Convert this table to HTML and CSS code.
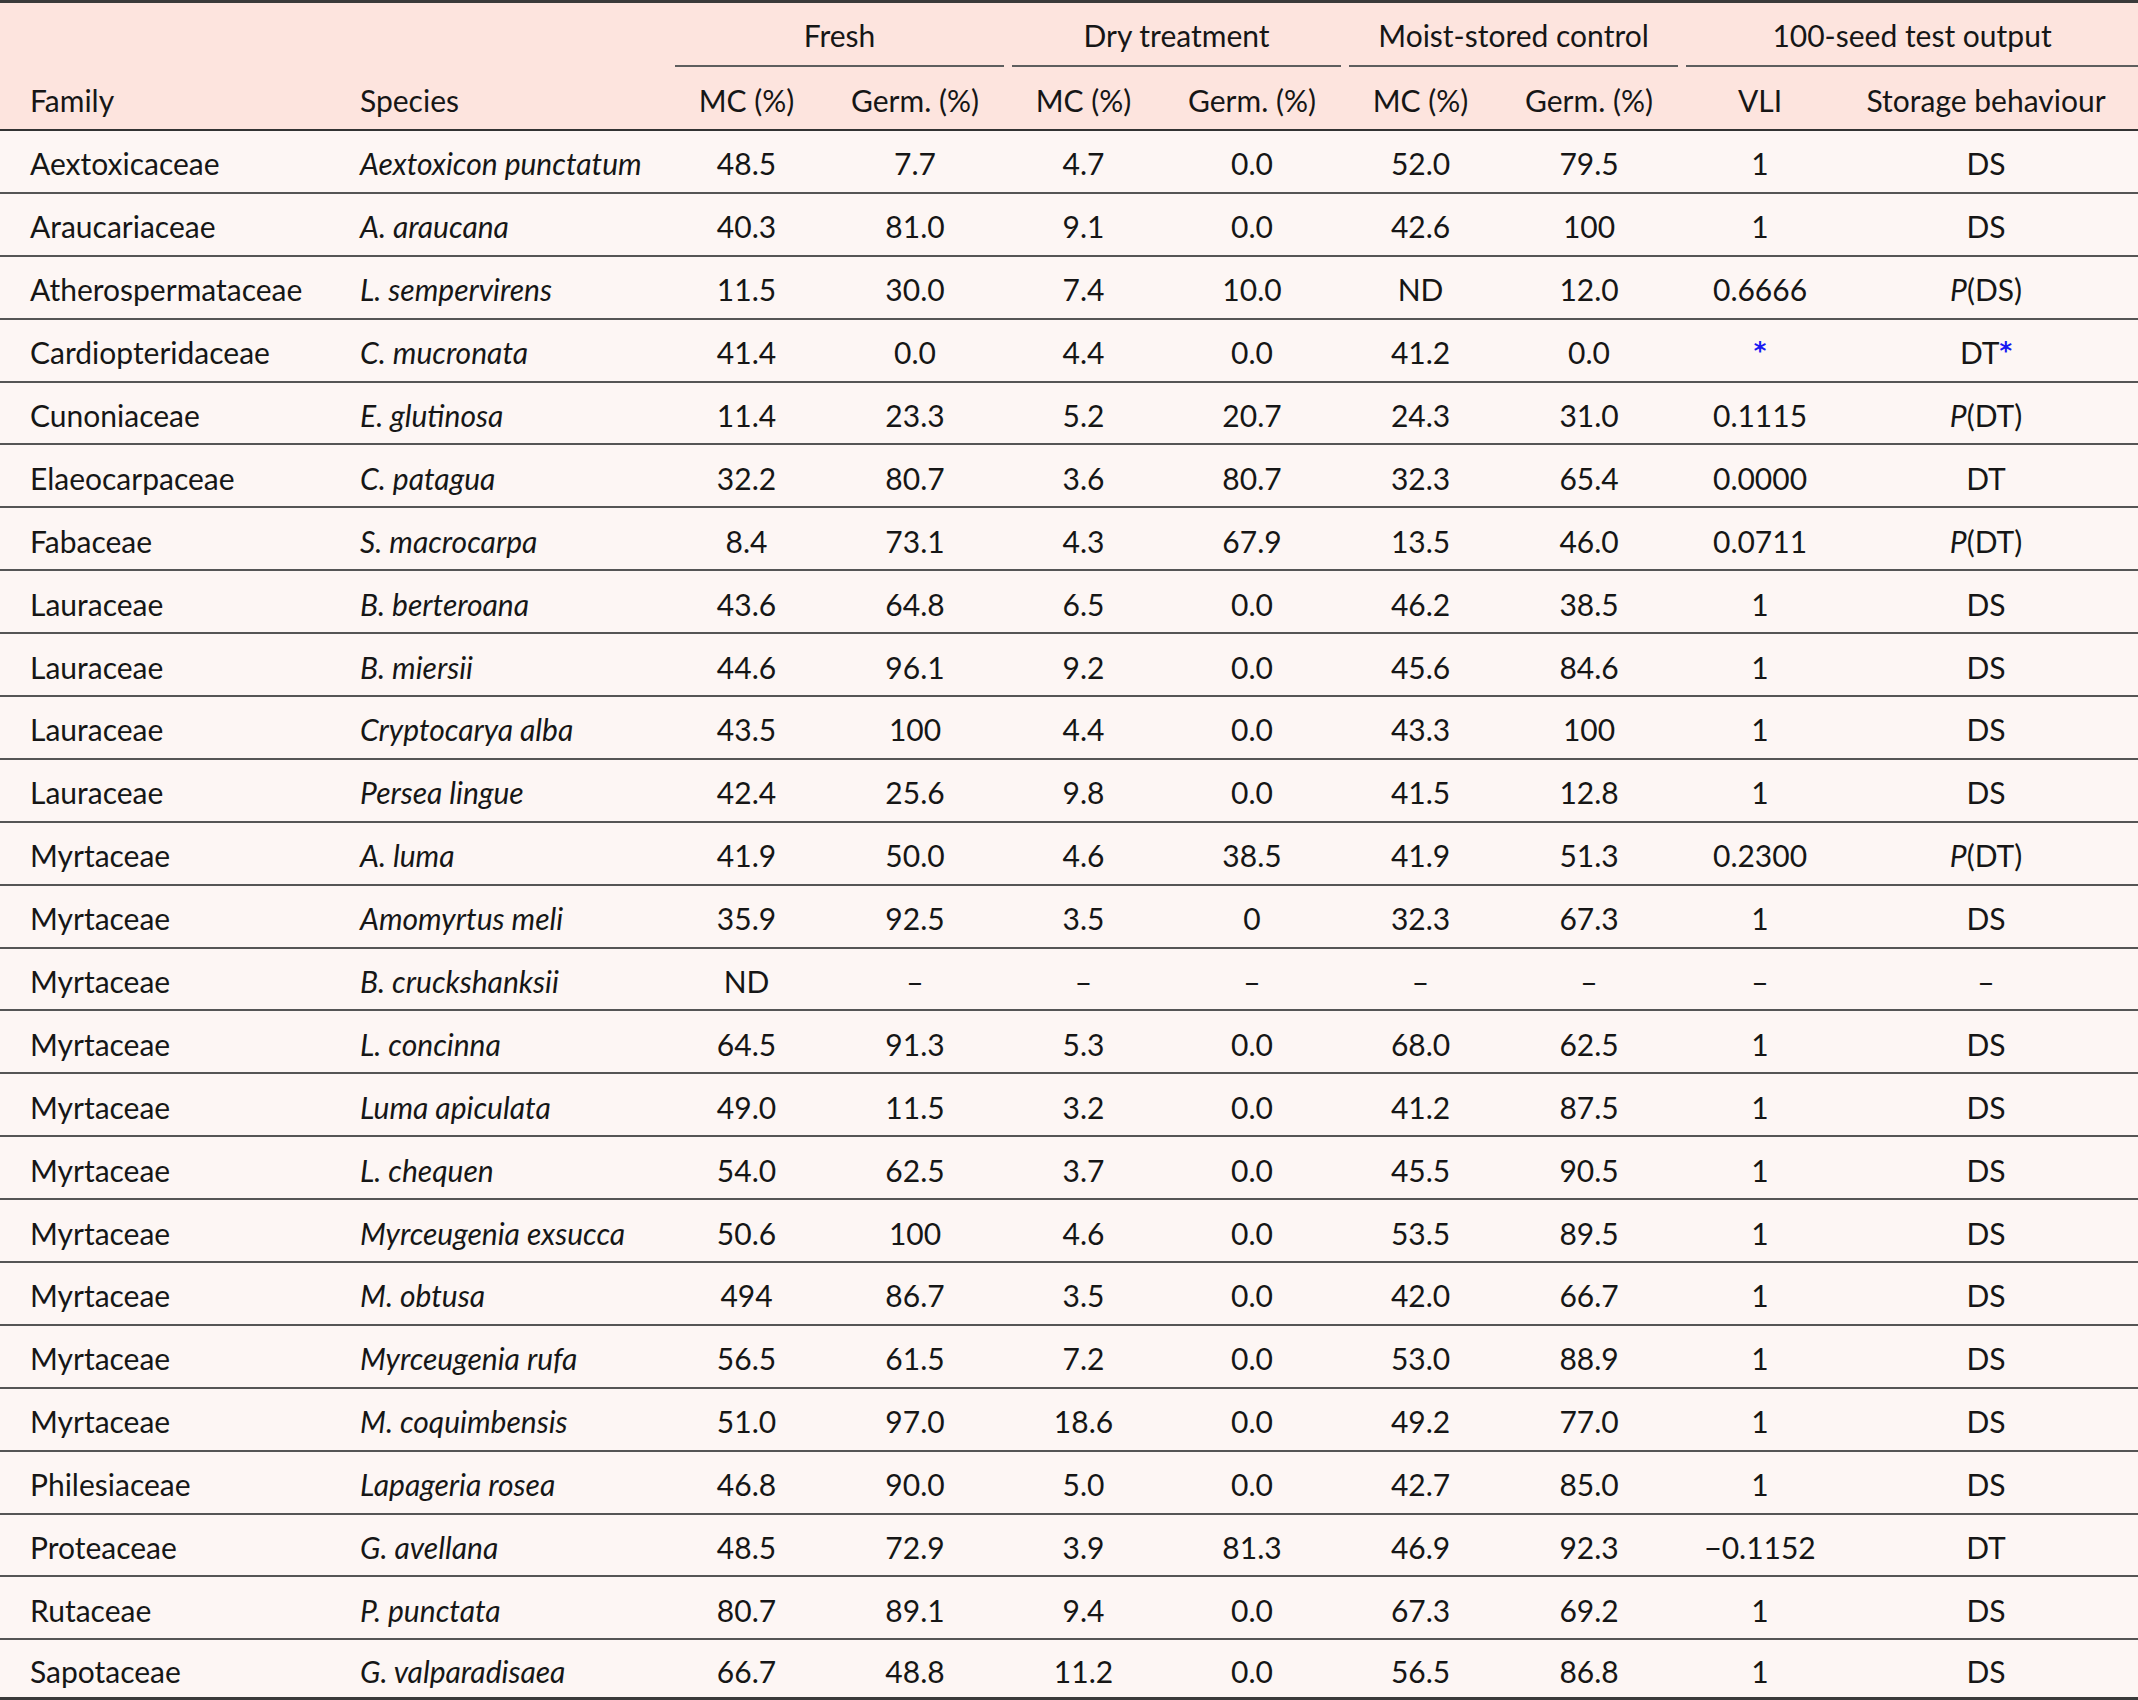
FILE: index.html
```html
<!DOCTYPE html>
<html lang="en">
<head>
<meta charset="utf-8">
<title>Seed storage behaviour</title>
<link rel="stylesheet" href="styles.css">
</head>
<body>
<table class="data">
  <colgroup>
    <col class="c-family"><col class="c-species">
    <col class="c-mc"><col class="c-germ">
    <col class="c-mc"><col class="c-germ">
    <col class="c-mc"><col class="c-germ">
    <col class="c-vli"><col class="c-store">
  </colgroup>
  <thead>
    <tr class="h1">
      <th></th><th></th>
      <th colspan="2" class="grp"><div class="grp-in">Fresh</div></th>
      <th colspan="2" class="grp"><div class="grp-in">Dry treatment</div></th>
      <th colspan="2" class="grp"><div class="grp-in">Moist-stored control</div></th>
      <th colspan="2" class="grp last"><div class="grp-in">100-seed test output</div></th>
    </tr>
    <tr class="h2">
      <th class="l">Family</th><th class="l">Species</th>
      <th>MC (%)</th><th>Germ. (%)</th>
      <th>MC (%)</th><th>Germ. (%)</th>
      <th>MC (%)</th><th>Germ. (%)</th>
      <th>VLI</th><th>Storage behaviour</th>
    </tr>
  </thead>
  <tbody>
    <tr><td class="l">Aextoxicaceae</td><td class="l sp">Aextoxicon punctatum</td><td>48.5</td><td>7.7</td><td>4.7</td><td>0.0</td><td>52.0</td><td>79.5</td><td>1</td><td>DS</td></tr>
    <tr><td class="l">Araucariaceae</td><td class="l sp">A. araucana</td><td>40.3</td><td>81.0</td><td>9.1</td><td>0.0</td><td>42.6</td><td>100</td><td>1</td><td>DS</td></tr>
    <tr><td class="l">Atherospermataceae</td><td class="l sp">L. sempervirens</td><td>11.5</td><td>30.0</td><td>7.4</td><td>10.0</td><td>ND</td><td>12.0</td><td>0.6666</td><td><i>P</i>(DS)</td></tr>
    <tr><td class="l">Cardiopteridaceae</td><td class="l sp">C. mucronata</td><td>41.4</td><td>0.0</td><td>4.4</td><td>0.0</td><td>41.2</td><td>0.0</td><td><span class="ast">*</span></td><td>DT<span class="ast">*</span></td></tr>
    <tr><td class="l">Cunoniaceae</td><td class="l sp">E. glutinosa</td><td>11.4</td><td>23.3</td><td>5.2</td><td>20.7</td><td>24.3</td><td>31.0</td><td>0.1115</td><td><i>P</i>(DT)</td></tr>
    <tr><td class="l">Elaeocarpaceae</td><td class="l sp">C. patagua</td><td>32.2</td><td>80.7</td><td>3.6</td><td>80.7</td><td>32.3</td><td>65.4</td><td>0.0000</td><td>DT</td></tr>
    <tr><td class="l">Fabaceae</td><td class="l sp">S. macrocarpa</td><td>8.4</td><td>73.1</td><td>4.3</td><td>67.9</td><td>13.5</td><td>46.0</td><td>0.0711</td><td><i>P</i>(DT)</td></tr>
    <tr><td class="l">Lauraceae</td><td class="l sp">B. berteroana</td><td>43.6</td><td>64.8</td><td>6.5</td><td>0.0</td><td>46.2</td><td>38.5</td><td>1</td><td>DS</td></tr>
    <tr><td class="l">Lauraceae</td><td class="l sp">B. miersii</td><td>44.6</td><td>96.1</td><td>9.2</td><td>0.0</td><td>45.6</td><td>84.6</td><td>1</td><td>DS</td></tr>
    <tr><td class="l">Lauraceae</td><td class="l sp">Cryptocarya alba</td><td>43.5</td><td>100</td><td>4.4</td><td>0.0</td><td>43.3</td><td>100</td><td>1</td><td>DS</td></tr>
    <tr><td class="l">Lauraceae</td><td class="l sp">Persea lingue</td><td>42.4</td><td>25.6</td><td>9.8</td><td>0.0</td><td>41.5</td><td>12.8</td><td>1</td><td>DS</td></tr>
    <tr><td class="l">Myrtaceae</td><td class="l sp">A. luma</td><td>41.9</td><td>50.0</td><td>4.6</td><td>38.5</td><td>41.9</td><td>51.3</td><td>0.2300</td><td><i>P</i>(DT)</td></tr>
    <tr><td class="l">Myrtaceae</td><td class="l sp">Amomyrtus meli</td><td>35.9</td><td>92.5</td><td>3.5</td><td>0</td><td>32.3</td><td>67.3</td><td>1</td><td>DS</td></tr>
    <tr><td class="l">Myrtaceae</td><td class="l sp">B. cruckshanksii</td><td>ND</td><td>–</td><td>–</td><td>–</td><td>–</td><td>–</td><td>–</td><td>–</td></tr>
    <tr><td class="l">Myrtaceae</td><td class="l sp">L. concinna</td><td>64.5</td><td>91.3</td><td>5.3</td><td>0.0</td><td>68.0</td><td>62.5</td><td>1</td><td>DS</td></tr>
    <tr><td class="l">Myrtaceae</td><td class="l sp">Luma apiculata</td><td>49.0</td><td>11.5</td><td>3.2</td><td>0.0</td><td>41.2</td><td>87.5</td><td>1</td><td>DS</td></tr>
    <tr><td class="l">Myrtaceae</td><td class="l sp">L. chequen</td><td>54.0</td><td>62.5</td><td>3.7</td><td>0.0</td><td>45.5</td><td>90.5</td><td>1</td><td>DS</td></tr>
    <tr><td class="l">Myrtaceae</td><td class="l sp">Myrceugenia exsucca</td><td>50.6</td><td>100</td><td>4.6</td><td>0.0</td><td>53.5</td><td>89.5</td><td>1</td><td>DS</td></tr>
    <tr><td class="l">Myrtaceae</td><td class="l sp">M. obtusa</td><td>494</td><td>86.7</td><td>3.5</td><td>0.0</td><td>42.0</td><td>66.7</td><td>1</td><td>DS</td></tr>
    <tr><td class="l">Myrtaceae</td><td class="l sp">Myrceugenia rufa</td><td>56.5</td><td>61.5</td><td>7.2</td><td>0.0</td><td>53.0</td><td>88.9</td><td>1</td><td>DS</td></tr>
    <tr><td class="l">Myrtaceae</td><td class="l sp">M. coquimbensis</td><td>51.0</td><td>97.0</td><td>18.6</td><td>0.0</td><td>49.2</td><td>77.0</td><td>1</td><td>DS</td></tr>
    <tr><td class="l">Philesiaceae</td><td class="l sp">Lapageria rosea</td><td>46.8</td><td>90.0</td><td>5.0</td><td>0.0</td><td>42.7</td><td>85.0</td><td>1</td><td>DS</td></tr>
    <tr><td class="l">Proteaceae</td><td class="l sp">G. avellana</td><td>48.5</td><td>72.9</td><td>3.9</td><td>81.3</td><td>46.9</td><td>92.3</td><td>−0.1152</td><td>DT</td></tr>
    <tr><td class="l">Rutaceae</td><td class="l sp">P. punctata</td><td>80.7</td><td>89.1</td><td>9.4</td><td>0.0</td><td>67.3</td><td>69.2</td><td>1</td><td>DS</td></tr>
    <tr class="last-row"><td class="l">Sapotaceae</td><td class="l sp">G. valparadisaea</td><td>66.7</td><td>48.8</td><td>11.2</td><td>0.0</td><td>56.5</td><td>86.8</td><td>1</td><td>DS</td></tr>
  </tbody>
</table>
</body>
</html>
```

FILE: styles.css
```css
html, body {
  margin: 0;
  padding: 0;
  background: #fdf6f4;
}

.data {
  width: 2138px;
  table-layout: fixed;
  border-collapse: separate;
  border-spacing: 0;
  font-family: "Lato", "Liberation Sans", sans-serif;
  font-size: 30px;
  color: #161616;
  border-top: 3px solid #3a3a3a;
  border-bottom: 3px solid #3a3a3a;
}

.c-family { width: 330px; }
.c-species { width: 345px; }
.c-mc { width: 143px; }
.c-germ { width: 194px; }
.c-vli { width: 148px; }
.c-store { width: 304px; }

thead th,
tbody td {
  box-sizing: border-box;
}

thead th {
  background: #fde4de;
  font-weight: normal;
  text-align: center;
  padding: 0;
  white-space: nowrap;
}

.h1 th {
  height: 64px;
  vertical-align: top;
}

.grp {
  padding-right: 8px;
}

.grp.last {
  padding-right: 0;
}

.grp-in {
  border-bottom: 2px solid #5e5e5e;
  padding: 12px 0 10px;
  line-height: 40px;
}

.h2 th {
  height: 64px;
  line-height: 40px;
  padding-top: 3px;
  border-bottom: 2px solid #333;
  vertical-align: middle;
}

th.l, td.l {
  text-align: left;
  padding-left: 30px;
}

tbody tr {
  height: 62.9px;
}

tbody tr.last-row {
  height: 57px;
}

tbody td {
  text-align: center;
  vertical-align: middle;
  padding-top: 5px;
  line-height: 36px;
  border-bottom: 2px solid #555;
  white-space: nowrap;
}

tbody tr.last-row td {
  border-bottom: 0;
  padding-top: 6px;
}

.sp {
  font-style: italic;
}

.ast {
  color: #1818f2;
  font-family: "DejaVu Sans", sans-serif;
  font-size: 0.8em;
  font-weight: bold;
  vertical-align: 0.22em;
}
```
